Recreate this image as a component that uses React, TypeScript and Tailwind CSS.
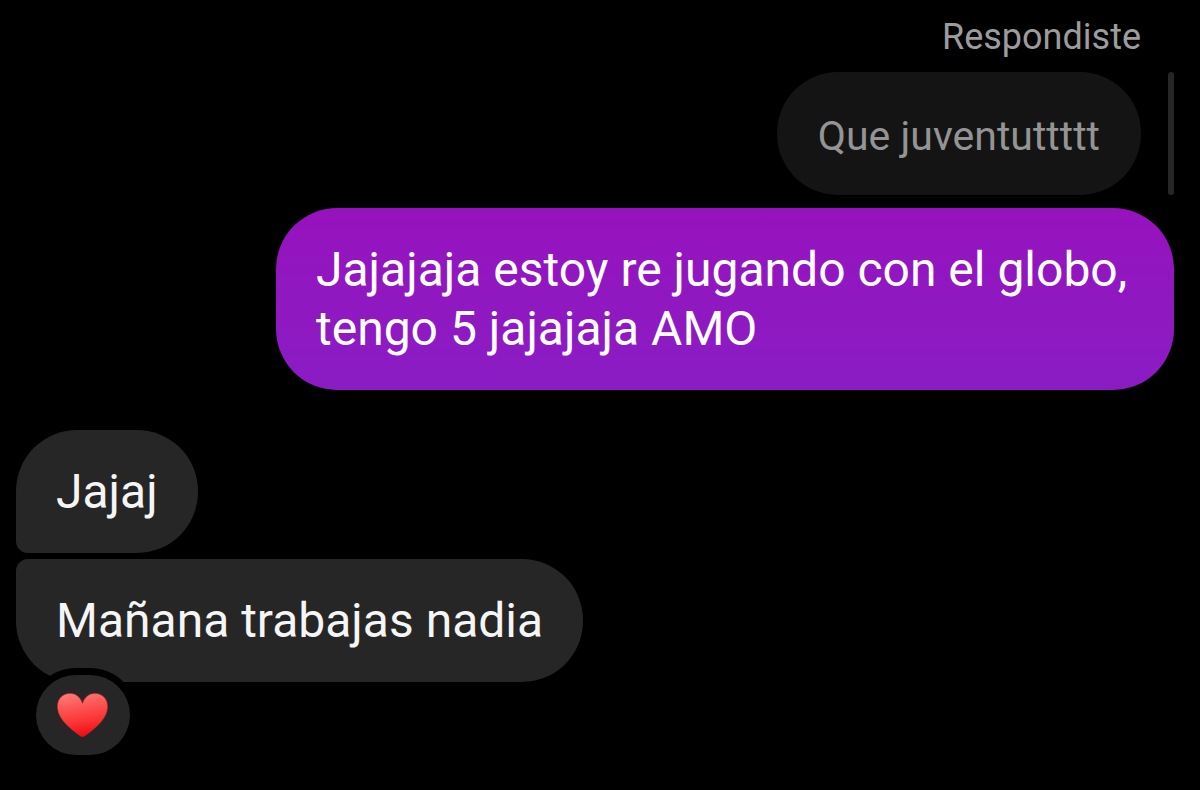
import { clsx } from 'clsx';

interface Message {
  id: number;
  text: string;
  mine: boolean;
  replyTo?: string;
  reaction?: boolean;
}

const messages: Message[] = [
  { id: 1, text: 'Jajajaja estoy re jugando con el globo, tengo 5 jajajaja AMO', mine: true, replyTo: 'Que juventuttttt' },
  { id: 2, text: 'Jajaj', mine: false },
  { id: 3, text: 'Mañana trabajas nadia', mine: false, reaction: true },
];

export default function App() {
  const sent = messages.filter((m) => m.mine);
  const received = messages.filter((m) => !m.mine);

  return (
    <main className="flex min-h-screen flex-col gap-10 bg-black pt-4 pb-27 font-[Roboto,sans-serif]">
      <section className="flex flex-col items-end pr-[26px] pl-4">
        {sent.map((m) => (
          <SentMessage key={m.id} message={m} />
        ))}
      </section>
      <section className="flex flex-col items-start gap-1.5 px-4">
        {received.map((m, i) => (
          <ReceivedMessage key={m.id} message={m} first={i === 0} last={i === received.length - 1} />
        ))}
      </section>
    </main>
  );
}

function SentMessage({ message }: { message: Message }) {
  return (
    <>
      {message.replyTo && (
        <>
          <p className="mr-[33px] mb-3.5 text-[36px] leading-[42px] text-[#9c9c9c]">Respondiste</p>
          <div className="mb-[13px] flex gap-[27px]">
            <blockquote className="rounded-[61px] bg-[#141414] px-[41px] pt-[35px] pb-[29px] text-[41px] leading-[59px] text-[#949494]">
              {message.replyTo}
            </blockquote>
            <span className="w-1.5 rounded-full bg-[#262626]" />
          </div>
        </>
      )}
      <p className="max-w-[898px] rounded-[61px] bg-linear-to-b from-[#9612bd] to-[#8a1cc4] px-10 py-8 text-[48px] leading-[59px] text-white">
        {message.text}
      </p>
    </>
  );
}

function ReceivedMessage({ message, first, last }: { message: Message; first: boolean; last: boolean }) {
  return (
    <div className="relative">
      <p
        className={clsx(
          'rounded-[61px] bg-[#262626] px-10 py-8 text-[48px] leading-[59px] text-[#f5f5f5]',
          !first && 'rounded-tl-xl',
          !last && 'rounded-bl-xl',
        )}
      >
        {message.text}
      </p>
      {message.reaction && (
        <button
          type="button"
          aria-label="Me encanta"
          className="absolute top-[116px] left-5 flex h-20 w-[94px] items-center justify-center rounded-[40px] bg-[#262626] ring-7 ring-black"
        >
          <HeartIcon />
        </button>
      )}
    </div>
  );
}

function HeartIcon() {
  return (
    <svg viewBox="0 0 52 44" className="h-11 w-[52px]" aria-hidden="true">
      <defs>
        <linearGradient id="heart-fill" x1="0.35" y1="0" x2="0.55" y2="1">
          <stop offset="0" stopColor="#ff7876" />
          <stop offset="0.3" stopColor="#fd5656" />
          <stop offset="0.65" stopColor="#fa3535" />
          <stop offset="1" stopColor="#f0090f" />
        </linearGradient>
      </defs>
      <path
        d="M25.500 10.500C23 3.500 18.500 .5 13 .5C5.500 .5 .5 6 .5 13.500C.5 21 5 27.500 11.500 33.500C15.500 37.200 20 40.500 23.500 42.900Q25.500 44 27.500 42.900C31 40.500 35.500 37.200 39.500 33.500C46 27.500 50.500 21 50.500 13.500C50.500 6 45.500 .5 38 .5C32.500 .5 28 3.500 25.500 10.500Z"
        fill="url(#heart-fill)"
        stroke="#d92a30"
        strokeOpacity="0.5"
        strokeWidth="1"
      />
    </svg>
  );
}
